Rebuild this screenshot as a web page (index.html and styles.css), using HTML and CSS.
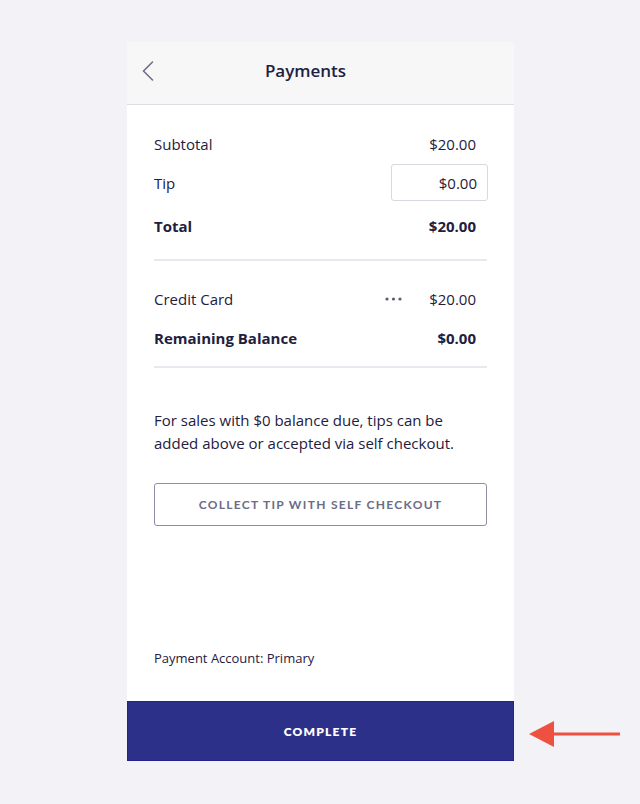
FILE: index.html
```html
<!DOCTYPE html>
<html>
<head>
<meta charset="utf-8">
<link rel="stylesheet" href="styles.css">
</head>
<body>
<div class="stage">
  <div class="card">
    <header class="header">
      <button class="back" aria-label="Back">
        <svg width="12" height="20" viewBox="0 0 12 20"><path d="M10.5 1 L1.5 10 L10.5 19" fill="none" stroke="#6d6e87" stroke-width="1.6" stroke-linecap="round" stroke-linejoin="round"/></svg>
      </button>
      <h1 class="title">Payments</h1>
    </header>
    <main class="content">
      <section class="group">
        <div class="row"><span>Subtotal</span><span class="val">$20.00</span></div>
        <div class="row"><span>Tip</span><span class="tip-box">$0.00</span></div>
        <div class="row strong total"><span>Total</span><span class="val">$20.00</span></div>
      </section>
      <section class="group bordered">
        <div class="row"><span>Credit Card</span><span class="right"><svg class="dots" width="17" height="4" viewBox="0 0 17 4"><circle cx="2" cy="2" r="1.6" fill="#5a5b75"/><circle cx="8.5" cy="2" r="1.6" fill="#5a5b75"/><circle cx="15" cy="2" r="1.6" fill="#5a5b75"/></svg><span class="val">$20.00</span></span></div>
        <div class="row strong"><span>Remaining Balance</span><span class="val">$0.00</span></div>
      </section>
      <p class="note">For sales with $0 balance due, tips can be added above or accepted via self checkout.</p>
      <button class="outline-btn">COLLECT TIP WITH SELF CHECKOUT</button>
      <div class="spacer"></div>
      <p class="account">Payment Account: Primary</p>
    </main>
    <button class="complete">COMPLETE</button>
  </div>
  <div class="arrow">
    <svg width="92" height="28" viewBox="0 0 92 28"><path d="M0 14 L25 1 L25 27 Z" fill="#ef5140"/><rect x="20" y="12.5" width="71" height="3" fill="#ef5140"/></svg>
  </div>
</div>
</body>
</html>
```
FILE: styles.css
```css
* { box-sizing: border-box; }
html, body { margin: 0; padding: 0; }
body {
  background: #f3f2f7;
  font-family: "Open Sans", "Noto Sans", sans-serif;
  color: #1f2040;
  width: 640px;
  height: 804px;
}
.stage {
  position: relative;
  padding-top: 42px;
  padding-left: 127px;
}
.card {
  width: 387px;
  height: 719px;
  background: #fff;
  display: flex;
  flex-direction: column;
}
.header {
  height: 63px;
  background: #f7f7f8;
  border-bottom: 1px solid #dcdce2;
  display: flex;
  align-items: center;
}
.back {
  width: 42px;
  height: 40px;
  border: 0;
  background: none;
  padding: 0 0 0 15px;
  display: flex;
  align-items: center;
  margin-top: -4px;
}
.title {
  flex: 1;
  margin: 0;
  padding-right: 72px;
  text-align: center;
  font-size: 17px;
  font-weight: 600;
  color: #1f2040;
  margin-top: -5px;
}
.content {
  flex: 1;
  padding: 0 27px;
  display: flex;
  flex-direction: column;
}
.group { padding-top: 19px; padding-bottom: 14px; }
.group.bordered { border-top: 2px solid #e8e8ee; border-bottom: 2px solid #e8e8ee; padding-top: 18px; padding-bottom: 9px; }
.row {
  display: flex;
  justify-content: space-between;
  align-items: center;
  font-size: 15px;
  min-height: 39px;
}
.row.total { min-height: 43px; padding-top: 4px; }
.row.strong { font-weight: 700; }
.val { padding-right: 11px; }
.right { display: flex; align-items: center; }
.dots { margin-right: 27px; }
.tip-box {
  width: 97px;
  height: 37px;
  border: 1px solid #d8d8e0;
  border-radius: 3px;
  display: flex;
  align-items: center;
  justify-content: flex-end;
  padding-right: 10px;
  margin-right: -1px;
}
.note {
  margin: 41px 0 0;
  font-size: 15px;
  line-height: 23px;
  color: #1f2040;
}
.outline-btn {
  margin-top: 28px;
  height: 43px;
  width: 100%;
  background: #fff;
  border: 1px solid #8e8fa5;
  border-radius: 3px;
  font-family: "Lato", "Noto Sans", sans-serif;
  font-weight: 700;
  font-size: 12px;
  letter-spacing: 1.3px;
  color: #6b6c85;
}
.spacer { flex: 1; }
.account {
  margin: 0 0 34px;
  font-size: 13px;
  color: #1f2040;
}
.complete {
  height: 60px;
  width: 100%;
  border: 1px solid #1f2290;
  background: #2d3088;
  color: #fff;
  font-family: "Lato", "Noto Sans", sans-serif;
  font-weight: 800;
  font-size: 12px;
  letter-spacing: 1.2px;
}
.arrow {
  position: absolute;
  left: 529px;
  top: 720px;
  line-height: 0;
}
```
